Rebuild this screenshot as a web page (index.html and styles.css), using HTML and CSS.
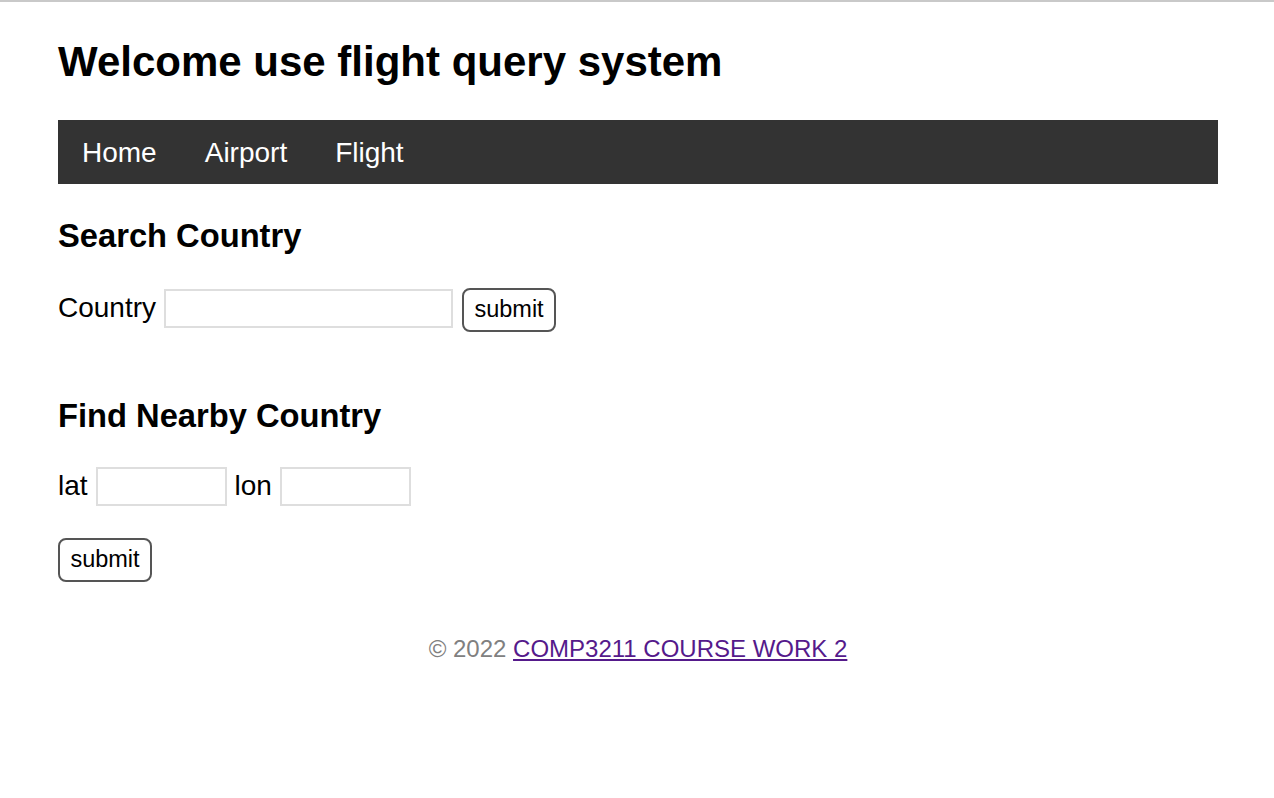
FILE: index.html
```html
<!DOCTYPE html>
<html lang="en">
<head>
<meta charset="utf-8">
<title>Flight query system</title>
<link rel="stylesheet" href="styles.css">
</head>
<body>
<div class="page">
  <header>
    <h1 class="title">Welcome use flight query system</h1>
    <nav class="nav">
      <a class="nav-item" href="#">Home</a>
      <a class="nav-item" href="#">Airport</a>
      <a class="nav-item" href="#">Flight</a>
    </nav>
  </header>

  <section class="section">
    <h3 class="section-title">Search Country</h3>
    <form class="row row-first">
      <label class="label" for="country">Country</label>
      <input class="field field-wide" id="country" type="text">
      <button class="btn" type="button">submit</button>
    </form>
  </section>

  <section class="section section-gap">
    <h3 class="section-title">Find Nearby Country</h3>
    <form>
      <div class="row">
        <label class="label" for="lat">lat</label>
        <input class="field field-small" id="lat" type="text">
        <label class="label" for="lon">lon</label>
        <input class="field field-small" id="lon" type="text">
      </div>
      <div class="row row-btn">
        <button class="btn" type="button">submit</button>
      </div>
    </form>
  </section>

  <footer class="footer">
    © 2022 <a class="footer-link" href="#">COMP3211 COURSE WORK 2</a>
  </footer>
</div>
</body>
</html>
```

FILE: styles.css
```css
html, body {
  margin: 0;
  padding: 0;
  background: #ffffff;
}

body {
  border-top: 2px solid #c9c9c9;
  font-family: "Liberation Sans", Arial, Helvetica, sans-serif;
  color: #000;
}

.page {
  padding: 0 56px 0 58px;
}

.title {
  margin: 36px 0 0;
  font-size: 42px;
  font-weight: bold;
  line-height: 48px;
}

.nav {
  margin-top: 34px;
  background: #333333;
  height: 64px;
  display: flex;
  box-sizing: border-box;
  padding: 17px 0 15px;
}

.nav-item {
  color: #ffffff;
  text-decoration: none;
  font-size: 28px;
  line-height: 32px;
  padding: 0 24px;
}

.section-title {
  margin: 33px 0 0;
  font-size: 32.7px;
  font-weight: bold;
  line-height: 37px;
}

.section-gap .section-title {
  margin-top: 65px;
}

.row {
  display: flex;
  align-items: flex-start;
  margin: 33px 0 0;
}

.row-first {
  margin-top: 34px;
}

.row-first .field {
  margin-top: 1px;
}

.row-first .label {
  margin-top: 4px;
}

.label {
  font-size: 28px;
  line-height: 32px;
  margin: 3px 8px 0 0;
}

.field {
  box-sizing: border-box;
  height: 39px;
  border: 2px solid #dedede;
  background: #fff;
  margin: 0 8px 0 0;
  padding: 2px 4px;
  font-size: 23px;
  font-family: inherit;
}

.field-wide {
  width: 289px;
  margin-right: 9px;
}

.field-small {
  width: 131px;
}

.btn {
  box-sizing: border-box;
  height: 44px;
  width: 94px;
  padding: 0;
  border: 2px solid #555555;
  border-radius: 8px;
  background: #ffffff;
  color: #000;
  font-family: inherit;
  font-size: 23.5px;
  line-height: 1;
}

.row-btn {
  margin-top: 32px;
}

.footer {
  margin-top: 53px;
  text-align: center;
  font-size: 24px;
  line-height: 28px;
  color: #808080;
}

.footer-link {
  color: #551a8b;
  text-decoration: underline;
}
```
